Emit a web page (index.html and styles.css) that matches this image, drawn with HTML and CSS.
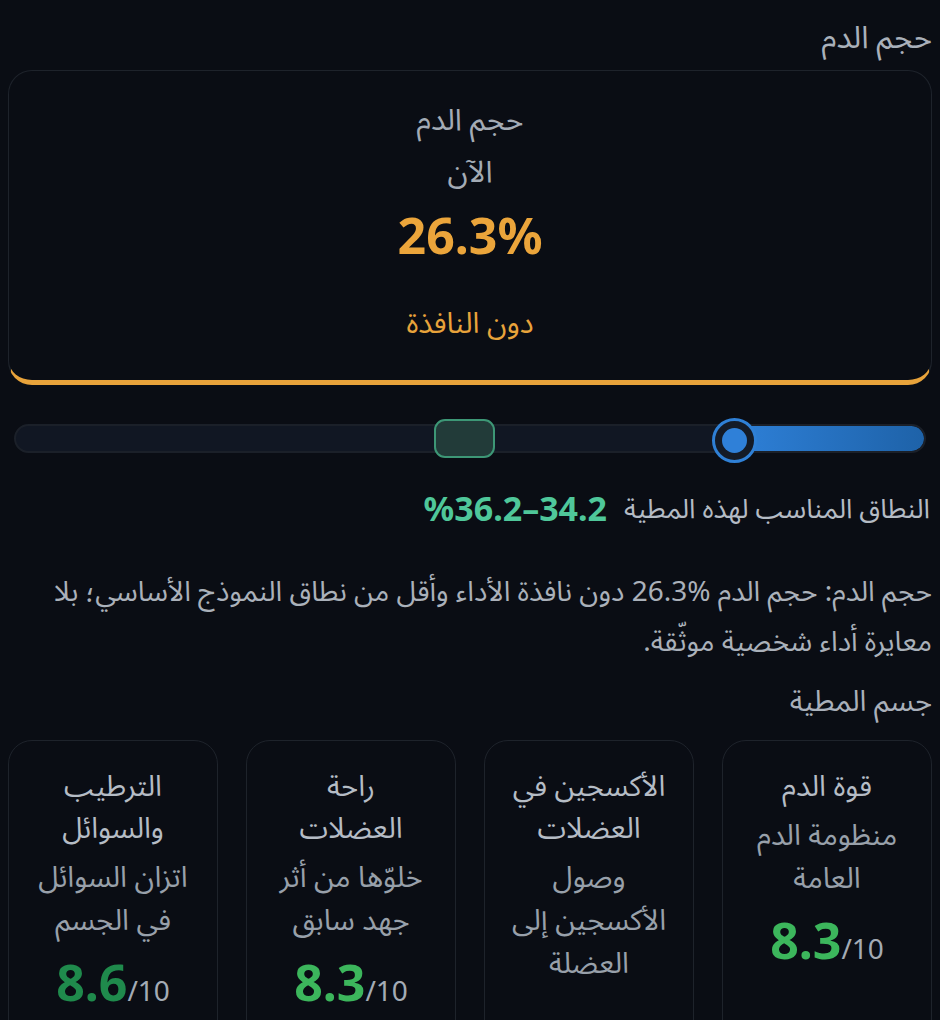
FILE: index.html
```html
<!DOCTYPE html>
<html lang="ar" dir="rtl">
<head>
<meta charset="utf-8">
<title>حجم الدم</title>
<link rel="stylesheet" href="styles.css">
</head>
<body>
<main class="page">
  <h2 class="section-title">حجم الدم</h2>

  <section class="hero-card">
    <div class="hero-label">حجم الدم</div>
    <div class="hero-label">الآن</div>
    <div class="hero-value">26.3%</div>
    <div class="hero-status">دون النافذة</div>
  </section>

  <div class="slider">
    <div class="track">
      <div class="fill" style="width: 20.9%"></div>
    </div>
    <div class="band" style="right: 47.3%; width: 6.6%"></div>
    <div class="thumb" style="right: 20.9%"><span class="thumb-dot"></span></div>
  </div>

  <div class="range-row">
    <span class="range-label">النطاق المناسب لهذه المطية</span>
    <span class="range-value">%36.2–34.2</span>
  </div>

  <p class="summary">حجم الدم: حجم الدم %26.3 دون نافذة الأداء وأقل من نطاق النموذج الأساسي؛ بلا معايرة أداء شخصية موثّقة.</p>

  <h3 class="section-title sub">جسم المطية</h3>

  <div class="metrics">
    <div class="metric">
      <div class="metric-title">قوة الدم</div>
      <div class="metric-desc">منظومة الدم<br>العامة</div>
      <div class="metric-score"><span class="score score-mid">8.3</span><span class="out-of">/10</span></div>
    </div>
    <div class="metric">
      <div class="metric-title">الأكسجين في<br>العضلات</div>
      <div class="metric-desc">وصول<br>الأكسجين إلى<br>العضلة</div>
    </div>
    <div class="metric">
      <div class="metric-title">راحة<br>العضلات</div>
      <div class="metric-desc">خلوّها من أثر<br>جهد سابق</div>
      <div class="metric-score"><span class="score score-mid">8.3</span><span class="out-of">/10</span></div>
    </div>
    <div class="metric">
      <div class="metric-title">الترطيب<br>والسوائل</div>
      <div class="metric-desc">اتزان السوائل<br>في الجسم</div>
      <div class="metric-score"><span class="score score-high">8.6</span><span class="out-of">/10</span></div>
    </div>
  </div>
</main>
</body>
</html>
```

FILE: styles.css
```css
html, body {
  background: #0a0d14;
}
body {
  margin: 8px;
  direction: rtl;
  font-family: "Noto Sans", "Noto Sans Arabic", sans-serif;
  color: #a7aeb8;
  overflow: hidden;
}
.page {
  display: flex;
  flex-direction: column;
}
.section-title {
  margin: 0;
  font-size: 31px;
  font-weight: 400;
  line-height: 56px;
  color: #a9b0ba;
}
.section-title.sub {
  margin-top: 13px;
  font-size: 29px;
  line-height: 44px;
}
.hero-card {
  margin-top: 6px;
  height: 315px;
  box-sizing: border-box;
  border: 1px solid #1e232b;
  border-bottom: 5px solid #e8a33b;
  border-radius: 24px;
  display: flex;
  flex-direction: column;
  align-items: center;
  padding-top: 22px;
}
.hero-label {
  font-size: 30px;
  line-height: 52px;
  color: #a3abb5;
}
.hero-value {
  margin-top: 8px;
  font-size: 50px;
  font-weight: 700;
  color: #eba53b;
  line-height: 60px;
  direction: ltr;
}
.hero-status {
  margin-top: 42px;
  font-size: 29px;
  line-height: 30px;
  color: #e8a33b;
}
.slider {
  position: relative;
  margin: 34px 6px 0 6px;
  height: 40px;
}
.track {
  position: absolute;
  left: 0;
  right: 0;
  top: 5px;
  height: 29px;
  box-sizing: border-box;
  border: 2px solid #1b2029;
  border-radius: 15px;
  background: #111723;
  overflow: hidden;
}
.fill {
  position: absolute;
  right: 0;
  top: 0;
  bottom: 0;
  background: linear-gradient(to right, #2e80d8, #1e62a8);
  border-radius: 0 13px 13px 0;
}
.band {
  position: absolute;
  top: 0;
  height: 39px;
  box-sizing: border-box;
  border: 2px solid #3d9776;
  border-radius: 11px;
  background: #223b39;
}
.thumb {
  position: absolute;
  top: -1px;
  width: 45px;
  height: 45px;
  margin-right: -22px;
  box-sizing: border-box;
  border: 3px solid #2f80d6;
  border-radius: 50%;
  background: #141b27;
  display: flex;
  align-items: center;
  justify-content: center;
}
.thumb-dot {
  width: 25px;
  height: 25px;
  border-radius: 50%;
  background: #2f80d8;
}
.range-row {
  margin-top: 29px;
  display: flex;
  align-items: center;
  gap: 17px;
  padding-right: 2px;
}
.range-label {
  font-size: 27px;
  color: #b4bbc4;
  line-height: 40px;
}
.range-value {
  font-size: 34px;
  font-weight: 700;
  color: #4fc79a;
  line-height: 40px;
  direction: ltr;
  unicode-bidi: isolate;
}
.summary {
  margin: 37px 0 0 0;
  font-size: 28px;
  line-height: 50px;
  color: #aab1ba;
}
.metrics {
  margin-top: 18px;
  display: grid;
  grid-template-columns: repeat(4, 1fr);
  gap: 28px;
}
.metric {
  border: 1px solid #1e232b;
  border-radius: 24px;
  padding: 23px 10px 30px;
  text-align: center;
  height: 340px;
}
.metric-title {
  font-size: 29px;
  line-height: 42px;
  color: #b5bcc5;
}
.metric-desc {
  margin-top: 6px;
  font-size: 29px;
  line-height: 43px;
  color: #98a0aa;
}
.metric-score {
  margin-top: 14px;
  direction: ltr;
  line-height: 56px;
}
.score {
  font-size: 50px;
  font-weight: 700;
}
.score-mid {
  color: #3cb65c;
}
.score-high {
  color: #1f8a4c;
}
.out-of {
  font-size: 28px;
  color: #a3abb5;
}
```
